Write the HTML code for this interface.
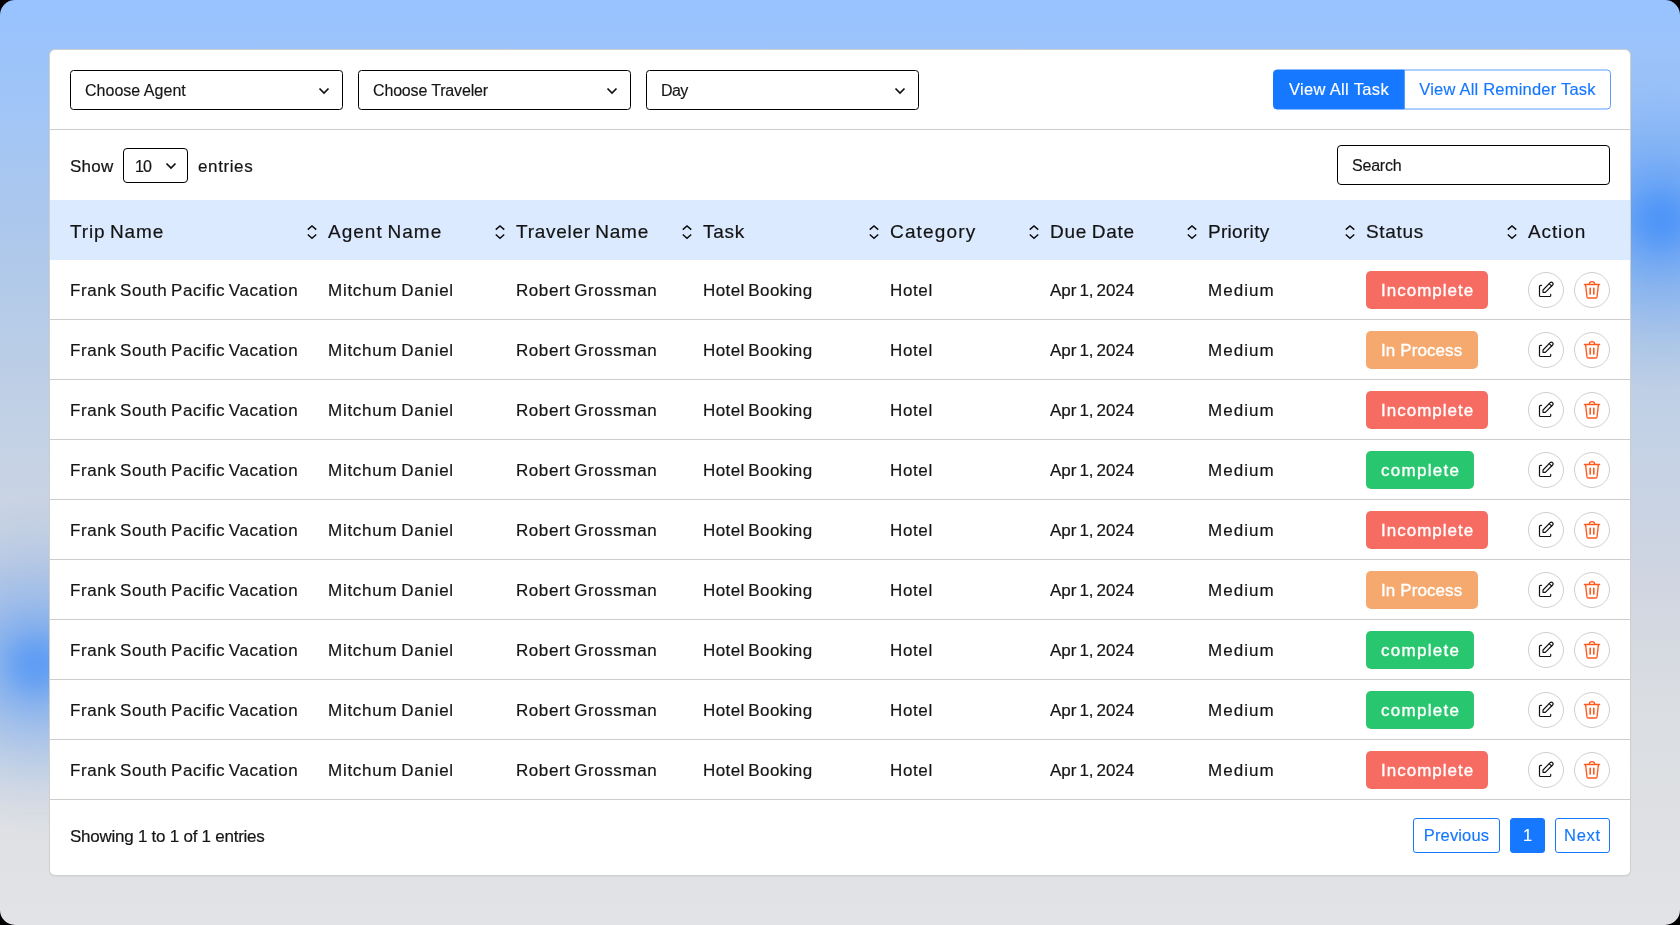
<!DOCTYPE html>
<html lang="en">
<head>
<meta charset="utf-8">
<title>Task List</title>
<style>
*{box-sizing:border-box;margin:0;padding:0}
html,body{width:1680px;height:925px;overflow:hidden;background:#000}
body{font-family:"Liberation Sans",sans-serif;color:#1f1f1f;position:relative}
#bg{position:absolute;left:0;top:0;width:1680px;height:925px;border-radius:15px;overflow:hidden;
 background:linear-gradient(180deg,rgb(152,195,255) 0px,rgb(160,197,247) 100px,rgb(170,199,238) 200px,rgb(183,204,231) 330px,rgb(197,210,229) 450px,rgb(207,213,225) 575px,rgb(218,221,225) 700px,rgb(226,227,230) 925px)}
.blob{position:absolute;width:360px;height:360px;filter:blur(4px);background:radial-gradient(circle at center,rgba(22,119,255,.62) 0px,rgba(22,119,255,.60) 12px,rgba(22,119,255,.52) 25px,rgba(22,119,255,.43) 36px,rgba(22,119,255,.38) 45px,rgba(22,119,255,.28) 65px,rgba(22,119,255,.20) 85px,rgba(22,119,255,.13) 105px,rgba(22,119,255,.06) 130px,rgba(22,119,255,0) 165px)}
#card{will-change:transform;position:absolute;left:50px;top:50px;width:1580px;height:825px;background:#fff;border-radius:5px;box-shadow:0 0 0 1px #cfcfcf,0 1px 2px rgba(0,0,0,.12)}
.abs{position:absolute}
.sel{position:absolute;top:20px;width:273px;height:40px;border:1px solid #000;border-radius:3.5px;background:#fff;font-size:16px;line-height:40px;padding-left:14px;color:#151515;-webkit-text-stroke:0.15px #151515}
.sel svg,.len svg{position:absolute}
.hr{position:absolute;left:0;width:1580px;height:1px;background:#cdcdcd}
.btn{position:absolute;top:20px;height:40px;font-size:16.5px;line-height:36px;text-align:center;transform:translate(0,-0.5px);-webkit-text-stroke:0.15px currentColor}
.txt{position:absolute;white-space:nowrap;color:#151515;-webkit-text-stroke:0.2px #151515}
#thead{position:absolute;left:0;top:150px;width:1580px;height:60px;background:#dbeafe}
.th{position:absolute;top:0;line-height:64px;word-spacing:-1.5px;font-size:19px;color:#141414;-webkit-text-stroke:0.2px #141414;white-space:nowrap}
.so{position:absolute;top:24px;width:12px;height:16px}
.row{position:absolute;left:0;width:1580px;height:60px;border-bottom:1px solid #cdcdcd}
.td{position:absolute;top:0;line-height:62px;word-spacing:-1.5px;font-size:17px;color:#151515;-webkit-text-stroke:0.2px #151515;white-space:nowrap}
.bd{position:absolute;left:1316px;top:11px;height:38px;border-radius:5px;color:#fff;font-size:17px;line-height:40px;padding-left:15px;-webkit-text-stroke:0.35px #fff;white-space:nowrap}
.r{background:#f66c62;width:122px}
.o{background:#f5a96e;width:112px}
.g{background:#28c76f;width:108px}
.ic{position:absolute;top:12px;width:36px;height:36px;border:1px solid #cfcfcf;border-radius:50%;background:#fff}
.ic svg{position:absolute}
.pg{position:absolute;top:768px;height:35px;border:1px solid #1677ff;border-radius:3px;-webkit-text-stroke:0.15px currentColor;color:#1677ff;font-size:16.5px;line-height:33px;text-align:center;background:#fff}
.h0{letter-spacing:0.84px}
.h1{letter-spacing:1.01px}
.h2{letter-spacing:0.73px}
.h3{letter-spacing:0.71px}
.h4{letter-spacing:1.16px}
.h5{letter-spacing:0.77px}
.h6{letter-spacing:0.3px}
.h7{letter-spacing:0.67px}
.h8{letter-spacing:0.88px}
.c1{letter-spacing:0.56px}
.c2{letter-spacing:0.73px}
.c3{letter-spacing:0.57px}
.c4{letter-spacing:0.4px}
.c5{letter-spacing:0.63px}
.c6{letter-spacing:-0.07px}
.c7{letter-spacing:1.05px}
.lr{letter-spacing:1.0px}
.lo{letter-spacing:0.1px}
.lg{letter-spacing:1.29px}
.s0{letter-spacing:0.02px}
.s1{letter-spacing:-0.16px}
.s2{letter-spacing:-0.63px}
.w_search{letter-spacing:-0.2px}
.w_show{letter-spacing:0.22px}
.w_entries{letter-spacing:0.61px}
.b1 span{letter-spacing:0.33px}
.b2 span{letter-spacing:0.21px}
.ft{letter-spacing:-0.25px}
.p1 span{letter-spacing:0.14px}
.p3 span{letter-spacing:0.75px}
</style>
</head>
<body>
<div id="bg">
 <div class="blob" style="left:-144px;top:485px"></div>
 <div class="blob" style="left:1481px;top:40px"></div>
 <div id="card">
  <div class="sel" style="left:20px"><span class="s0">Choose Agent</span><svg width="12" height="8" viewBox="0 0 12 8" style="left:247px;top:16px"><path d="M1.5 1.5 L6 6 L10.5 1.5" fill="none" stroke="#111" stroke-width="1.75" stroke-linecap="butt" stroke-linejoin="miter"/></svg></div>
  <div class="sel" style="left:308px"><span class="s1">Choose Traveler</span><svg width="12" height="8" viewBox="0 0 12 8" style="left:247px;top:16px"><path d="M1.5 1.5 L6 6 L10.5 1.5" fill="none" stroke="#111" stroke-width="1.75" stroke-linecap="butt" stroke-linejoin="miter"/></svg></div>
  <div class="sel" style="left:596px"><span class="s2">Day</span><svg width="12" height="8" viewBox="0 0 12 8" style="left:247px;top:16px"><path d="M1.5 1.5 L6 6 L10.5 1.5" fill="none" stroke="#111" stroke-width="1.75" stroke-linecap="butt" stroke-linejoin="miter"/></svg></div>
  <div class="btn b1" style="left:1223px;width:132px;background:#1677ff;color:#fff;border-radius:4px 0 0 4px;border:1px solid #1677ff"><span>View All Task</span></div>
  <div class="btn b2" style="left:1354px;width:207px;background:#fff;color:#1677ff;border-radius:0 4px 4px 0;border:1px solid #5a9dff"><span>View All Reminder Task</span></div>
  <div class="hr" style="top:79px"></div>
  <span class="txt lb" style="left:20px;top:98px;line-height:38px;font-size:17px"><span class="w_show">Show</span></span>
  <div class="len abs" style="left:73px;top:98px;width:65px;height:35px;border:1px solid #000;border-radius:4px;font-size:16px;line-height:35px;padding-left:11px;letter-spacing:-1px;color:#151515;-webkit-text-stroke:0.2px #151515"><span class="w_10">10</span><svg width="12" height="8" viewBox="0 0 12 8" style="left:41px;top:13px"><path d="M1.5 1.5 L6 6 L10.5 1.5" fill="none" stroke="#111" stroke-width="1.75" stroke-linecap="butt" stroke-linejoin="miter"/></svg></div>
  <span class="txt lb" style="left:148px;top:98px;line-height:38px;font-size:17px"><span class="w_entries">entries</span></span>
  <div class="abs" style="left:1287px;top:95px;width:273px;height:40px;border:1px solid #000;border-radius:4px;font-size:16px;line-height:40px;padding-left:14px;color:#151515;-webkit-text-stroke:0.15px #151515"><span class="w_search">Search</span></div>
  <div id="thead">
   <span class="th h0" style="left:20px">Trip Name</span><svg class="so" style="left:256px" viewBox="0 0 12 16"><path d="M1.75 5.6 L6 1.9 L10.25 5.6 M1.75 10.5 L6 14.2 L10.25 10.5" fill="none" stroke="#0a0a0a" stroke-width="1.45" stroke-linejoin="miter"/></svg>
   <span class="th h1" style="left:278px">Agent Name</span><svg class="so" style="left:444px" viewBox="0 0 12 16"><path d="M1.75 5.6 L6 1.9 L10.25 5.6 M1.75 10.5 L6 14.2 L10.25 10.5" fill="none" stroke="#0a0a0a" stroke-width="1.45" stroke-linejoin="miter"/></svg>
   <span class="th h2" style="left:466px">Traveler Name</span><svg class="so" style="left:631px" viewBox="0 0 12 16"><path d="M1.75 5.6 L6 1.9 L10.25 5.6 M1.75 10.5 L6 14.2 L10.25 10.5" fill="none" stroke="#0a0a0a" stroke-width="1.45" stroke-linejoin="miter"/></svg>
   <span class="th h3" style="left:653px">Task</span><svg class="so" style="left:818px" viewBox="0 0 12 16"><path d="M1.75 5.6 L6 1.9 L10.25 5.6 M1.75 10.5 L6 14.2 L10.25 10.5" fill="none" stroke="#0a0a0a" stroke-width="1.45" stroke-linejoin="miter"/></svg>
   <span class="th h4" style="left:840px">Category</span><svg class="so" style="left:978px" viewBox="0 0 12 16"><path d="M1.75 5.6 L6 1.9 L10.25 5.6 M1.75 10.5 L6 14.2 L10.25 10.5" fill="none" stroke="#0a0a0a" stroke-width="1.45" stroke-linejoin="miter"/></svg>
   <span class="th h5" style="left:1000px">Due Date</span><svg class="so" style="left:1136px" viewBox="0 0 12 16"><path d="M1.75 5.6 L6 1.9 L10.25 5.6 M1.75 10.5 L6 14.2 L10.25 10.5" fill="none" stroke="#0a0a0a" stroke-width="1.45" stroke-linejoin="miter"/></svg>
   <span class="th h6" style="left:1158px">Priority</span><svg class="so" style="left:1294px" viewBox="0 0 12 16"><path d="M1.75 5.6 L6 1.9 L10.25 5.6 M1.75 10.5 L6 14.2 L10.25 10.5" fill="none" stroke="#0a0a0a" stroke-width="1.45" stroke-linejoin="miter"/></svg>
   <span class="th h7" style="left:1316px">Status</span><svg class="so" style="left:1456px" viewBox="0 0 12 16"><path d="M1.75 5.6 L6 1.9 L10.25 5.6 M1.75 10.5 L6 14.2 L10.25 10.5" fill="none" stroke="#0a0a0a" stroke-width="1.45" stroke-linejoin="miter"/></svg>
   <span class="th h8" style="left:1478px">Action</span>
  </div>
  <div class="row" style="top:210px"><span class="td c1" style="left:20px">Frank South Pacific Vacation</span><span class="td c2" style="left:278px">Mitchum Daniel</span><span class="td c3" style="left:466px">Robert Grossman</span><span class="td c4" style="left:653px">Hotel Booking</span><span class="td c5" style="left:840px">Hotel</span><span class="td c6" style="left:1000px">Apr 1, 2024</span><span class="td c7" style="left:1158px">Medium</span><span class="bd r"><span class="lr">Incomplete</span></span><span class="ic" style="left:1478px"><svg width="18" height="18" viewBox="0 0 18 18" style="left:8px;top:8px"><g fill="none" stroke="#111" stroke-width="1.2" stroke-linecap="round" stroke-linejoin="round"><path d="M4.6 4.3 H3.6 a1.1 1.1 0 0 0 -1.1 1.1 V14.4 a1.1 1.1 0 0 0 1.1 1.1 H12.6 a1.1 1.1 0 0 0 1.1 -1.1 V13.4"/><path d="M13.2 1.6 a1.7 1.7 0 0 1 2.4 2.4 L8.3 11.3 H6 V9 Z"/><path d="M12.2 2.7 L14.6 5.1"/></g></svg></span><span class="ic" style="left:1524px"><svg width="20" height="20" viewBox="0 0 20 20" style="left:7px;top:7px"><g fill="none" stroke="#ff5a1f" stroke-width="1.35" stroke-linecap="round" stroke-linejoin="round"><path d="M2.4 4.5 H17.6"/><path d="M7.3 4.3 a2.7 2.7 0 0 1 5.4 0"/><path d="M3.6 4.8 L5 16.9 a1.3 1.3 0 0 0 1.3 1.1 H13.7 a1.3 1.3 0 0 0 1.3 -1.1 L16.4 4.8"/><path d="M8.2 8.3 V14.1 M11.8 8.3 V14.1" stroke-width="1.6"/></g></svg></span></div>
  <div class="row" style="top:270px"><span class="td c1" style="left:20px">Frank South Pacific Vacation</span><span class="td c2" style="left:278px">Mitchum Daniel</span><span class="td c3" style="left:466px">Robert Grossman</span><span class="td c4" style="left:653px">Hotel Booking</span><span class="td c5" style="left:840px">Hotel</span><span class="td c6" style="left:1000px">Apr 1, 2024</span><span class="td c7" style="left:1158px">Medium</span><span class="bd o"><span class="lo">In Process</span></span><span class="ic" style="left:1478px"><svg width="18" height="18" viewBox="0 0 18 18" style="left:8px;top:8px"><g fill="none" stroke="#111" stroke-width="1.2" stroke-linecap="round" stroke-linejoin="round"><path d="M4.6 4.3 H3.6 a1.1 1.1 0 0 0 -1.1 1.1 V14.4 a1.1 1.1 0 0 0 1.1 1.1 H12.6 a1.1 1.1 0 0 0 1.1 -1.1 V13.4"/><path d="M13.2 1.6 a1.7 1.7 0 0 1 2.4 2.4 L8.3 11.3 H6 V9 Z"/><path d="M12.2 2.7 L14.6 5.1"/></g></svg></span><span class="ic" style="left:1524px"><svg width="20" height="20" viewBox="0 0 20 20" style="left:7px;top:7px"><g fill="none" stroke="#ff5a1f" stroke-width="1.35" stroke-linecap="round" stroke-linejoin="round"><path d="M2.4 4.5 H17.6"/><path d="M7.3 4.3 a2.7 2.7 0 0 1 5.4 0"/><path d="M3.6 4.8 L5 16.9 a1.3 1.3 0 0 0 1.3 1.1 H13.7 a1.3 1.3 0 0 0 1.3 -1.1 L16.4 4.8"/><path d="M8.2 8.3 V14.1 M11.8 8.3 V14.1" stroke-width="1.6"/></g></svg></span></div>
  <div class="row" style="top:330px"><span class="td c1" style="left:20px">Frank South Pacific Vacation</span><span class="td c2" style="left:278px">Mitchum Daniel</span><span class="td c3" style="left:466px">Robert Grossman</span><span class="td c4" style="left:653px">Hotel Booking</span><span class="td c5" style="left:840px">Hotel</span><span class="td c6" style="left:1000px">Apr 1, 2024</span><span class="td c7" style="left:1158px">Medium</span><span class="bd r"><span class="lr">Incomplete</span></span><span class="ic" style="left:1478px"><svg width="18" height="18" viewBox="0 0 18 18" style="left:8px;top:8px"><g fill="none" stroke="#111" stroke-width="1.2" stroke-linecap="round" stroke-linejoin="round"><path d="M4.6 4.3 H3.6 a1.1 1.1 0 0 0 -1.1 1.1 V14.4 a1.1 1.1 0 0 0 1.1 1.1 H12.6 a1.1 1.1 0 0 0 1.1 -1.1 V13.4"/><path d="M13.2 1.6 a1.7 1.7 0 0 1 2.4 2.4 L8.3 11.3 H6 V9 Z"/><path d="M12.2 2.7 L14.6 5.1"/></g></svg></span><span class="ic" style="left:1524px"><svg width="20" height="20" viewBox="0 0 20 20" style="left:7px;top:7px"><g fill="none" stroke="#ff5a1f" stroke-width="1.35" stroke-linecap="round" stroke-linejoin="round"><path d="M2.4 4.5 H17.6"/><path d="M7.3 4.3 a2.7 2.7 0 0 1 5.4 0"/><path d="M3.6 4.8 L5 16.9 a1.3 1.3 0 0 0 1.3 1.1 H13.7 a1.3 1.3 0 0 0 1.3 -1.1 L16.4 4.8"/><path d="M8.2 8.3 V14.1 M11.8 8.3 V14.1" stroke-width="1.6"/></g></svg></span></div>
  <div class="row" style="top:390px"><span class="td c1" style="left:20px">Frank South Pacific Vacation</span><span class="td c2" style="left:278px">Mitchum Daniel</span><span class="td c3" style="left:466px">Robert Grossman</span><span class="td c4" style="left:653px">Hotel Booking</span><span class="td c5" style="left:840px">Hotel</span><span class="td c6" style="left:1000px">Apr 1, 2024</span><span class="td c7" style="left:1158px">Medium</span><span class="bd g"><span class="lg">complete</span></span><span class="ic" style="left:1478px"><svg width="18" height="18" viewBox="0 0 18 18" style="left:8px;top:8px"><g fill="none" stroke="#111" stroke-width="1.2" stroke-linecap="round" stroke-linejoin="round"><path d="M4.6 4.3 H3.6 a1.1 1.1 0 0 0 -1.1 1.1 V14.4 a1.1 1.1 0 0 0 1.1 1.1 H12.6 a1.1 1.1 0 0 0 1.1 -1.1 V13.4"/><path d="M13.2 1.6 a1.7 1.7 0 0 1 2.4 2.4 L8.3 11.3 H6 V9 Z"/><path d="M12.2 2.7 L14.6 5.1"/></g></svg></span><span class="ic" style="left:1524px"><svg width="20" height="20" viewBox="0 0 20 20" style="left:7px;top:7px"><g fill="none" stroke="#ff5a1f" stroke-width="1.35" stroke-linecap="round" stroke-linejoin="round"><path d="M2.4 4.5 H17.6"/><path d="M7.3 4.3 a2.7 2.7 0 0 1 5.4 0"/><path d="M3.6 4.8 L5 16.9 a1.3 1.3 0 0 0 1.3 1.1 H13.7 a1.3 1.3 0 0 0 1.3 -1.1 L16.4 4.8"/><path d="M8.2 8.3 V14.1 M11.8 8.3 V14.1" stroke-width="1.6"/></g></svg></span></div>
  <div class="row" style="top:450px"><span class="td c1" style="left:20px">Frank South Pacific Vacation</span><span class="td c2" style="left:278px">Mitchum Daniel</span><span class="td c3" style="left:466px">Robert Grossman</span><span class="td c4" style="left:653px">Hotel Booking</span><span class="td c5" style="left:840px">Hotel</span><span class="td c6" style="left:1000px">Apr 1, 2024</span><span class="td c7" style="left:1158px">Medium</span><span class="bd r"><span class="lr">Incomplete</span></span><span class="ic" style="left:1478px"><svg width="18" height="18" viewBox="0 0 18 18" style="left:8px;top:8px"><g fill="none" stroke="#111" stroke-width="1.2" stroke-linecap="round" stroke-linejoin="round"><path d="M4.6 4.3 H3.6 a1.1 1.1 0 0 0 -1.1 1.1 V14.4 a1.1 1.1 0 0 0 1.1 1.1 H12.6 a1.1 1.1 0 0 0 1.1 -1.1 V13.4"/><path d="M13.2 1.6 a1.7 1.7 0 0 1 2.4 2.4 L8.3 11.3 H6 V9 Z"/><path d="M12.2 2.7 L14.6 5.1"/></g></svg></span><span class="ic" style="left:1524px"><svg width="20" height="20" viewBox="0 0 20 20" style="left:7px;top:7px"><g fill="none" stroke="#ff5a1f" stroke-width="1.35" stroke-linecap="round" stroke-linejoin="round"><path d="M2.4 4.5 H17.6"/><path d="M7.3 4.3 a2.7 2.7 0 0 1 5.4 0"/><path d="M3.6 4.8 L5 16.9 a1.3 1.3 0 0 0 1.3 1.1 H13.7 a1.3 1.3 0 0 0 1.3 -1.1 L16.4 4.8"/><path d="M8.2 8.3 V14.1 M11.8 8.3 V14.1" stroke-width="1.6"/></g></svg></span></div>
  <div class="row" style="top:510px"><span class="td c1" style="left:20px">Frank South Pacific Vacation</span><span class="td c2" style="left:278px">Mitchum Daniel</span><span class="td c3" style="left:466px">Robert Grossman</span><span class="td c4" style="left:653px">Hotel Booking</span><span class="td c5" style="left:840px">Hotel</span><span class="td c6" style="left:1000px">Apr 1, 2024</span><span class="td c7" style="left:1158px">Medium</span><span class="bd o"><span class="lo">In Process</span></span><span class="ic" style="left:1478px"><svg width="18" height="18" viewBox="0 0 18 18" style="left:8px;top:8px"><g fill="none" stroke="#111" stroke-width="1.2" stroke-linecap="round" stroke-linejoin="round"><path d="M4.6 4.3 H3.6 a1.1 1.1 0 0 0 -1.1 1.1 V14.4 a1.1 1.1 0 0 0 1.1 1.1 H12.6 a1.1 1.1 0 0 0 1.1 -1.1 V13.4"/><path d="M13.2 1.6 a1.7 1.7 0 0 1 2.4 2.4 L8.3 11.3 H6 V9 Z"/><path d="M12.2 2.7 L14.6 5.1"/></g></svg></span><span class="ic" style="left:1524px"><svg width="20" height="20" viewBox="0 0 20 20" style="left:7px;top:7px"><g fill="none" stroke="#ff5a1f" stroke-width="1.35" stroke-linecap="round" stroke-linejoin="round"><path d="M2.4 4.5 H17.6"/><path d="M7.3 4.3 a2.7 2.7 0 0 1 5.4 0"/><path d="M3.6 4.8 L5 16.9 a1.3 1.3 0 0 0 1.3 1.1 H13.7 a1.3 1.3 0 0 0 1.3 -1.1 L16.4 4.8"/><path d="M8.2 8.3 V14.1 M11.8 8.3 V14.1" stroke-width="1.6"/></g></svg></span></div>
  <div class="row" style="top:570px"><span class="td c1" style="left:20px">Frank South Pacific Vacation</span><span class="td c2" style="left:278px">Mitchum Daniel</span><span class="td c3" style="left:466px">Robert Grossman</span><span class="td c4" style="left:653px">Hotel Booking</span><span class="td c5" style="left:840px">Hotel</span><span class="td c6" style="left:1000px">Apr 1, 2024</span><span class="td c7" style="left:1158px">Medium</span><span class="bd g"><span class="lg">complete</span></span><span class="ic" style="left:1478px"><svg width="18" height="18" viewBox="0 0 18 18" style="left:8px;top:8px"><g fill="none" stroke="#111" stroke-width="1.2" stroke-linecap="round" stroke-linejoin="round"><path d="M4.6 4.3 H3.6 a1.1 1.1 0 0 0 -1.1 1.1 V14.4 a1.1 1.1 0 0 0 1.1 1.1 H12.6 a1.1 1.1 0 0 0 1.1 -1.1 V13.4"/><path d="M13.2 1.6 a1.7 1.7 0 0 1 2.4 2.4 L8.3 11.3 H6 V9 Z"/><path d="M12.2 2.7 L14.6 5.1"/></g></svg></span><span class="ic" style="left:1524px"><svg width="20" height="20" viewBox="0 0 20 20" style="left:7px;top:7px"><g fill="none" stroke="#ff5a1f" stroke-width="1.35" stroke-linecap="round" stroke-linejoin="round"><path d="M2.4 4.5 H17.6"/><path d="M7.3 4.3 a2.7 2.7 0 0 1 5.4 0"/><path d="M3.6 4.8 L5 16.9 a1.3 1.3 0 0 0 1.3 1.1 H13.7 a1.3 1.3 0 0 0 1.3 -1.1 L16.4 4.8"/><path d="M8.2 8.3 V14.1 M11.8 8.3 V14.1" stroke-width="1.6"/></g></svg></span></div>
  <div class="row" style="top:630px"><span class="td c1" style="left:20px">Frank South Pacific Vacation</span><span class="td c2" style="left:278px">Mitchum Daniel</span><span class="td c3" style="left:466px">Robert Grossman</span><span class="td c4" style="left:653px">Hotel Booking</span><span class="td c5" style="left:840px">Hotel</span><span class="td c6" style="left:1000px">Apr 1, 2024</span><span class="td c7" style="left:1158px">Medium</span><span class="bd g"><span class="lg">complete</span></span><span class="ic" style="left:1478px"><svg width="18" height="18" viewBox="0 0 18 18" style="left:8px;top:8px"><g fill="none" stroke="#111" stroke-width="1.2" stroke-linecap="round" stroke-linejoin="round"><path d="M4.6 4.3 H3.6 a1.1 1.1 0 0 0 -1.1 1.1 V14.4 a1.1 1.1 0 0 0 1.1 1.1 H12.6 a1.1 1.1 0 0 0 1.1 -1.1 V13.4"/><path d="M13.2 1.6 a1.7 1.7 0 0 1 2.4 2.4 L8.3 11.3 H6 V9 Z"/><path d="M12.2 2.7 L14.6 5.1"/></g></svg></span><span class="ic" style="left:1524px"><svg width="20" height="20" viewBox="0 0 20 20" style="left:7px;top:7px"><g fill="none" stroke="#ff5a1f" stroke-width="1.35" stroke-linecap="round" stroke-linejoin="round"><path d="M2.4 4.5 H17.6"/><path d="M7.3 4.3 a2.7 2.7 0 0 1 5.4 0"/><path d="M3.6 4.8 L5 16.9 a1.3 1.3 0 0 0 1.3 1.1 H13.7 a1.3 1.3 0 0 0 1.3 -1.1 L16.4 4.8"/><path d="M8.2 8.3 V14.1 M11.8 8.3 V14.1" stroke-width="1.6"/></g></svg></span></div>
  <div class="row" style="top:690px"><span class="td c1" style="left:20px">Frank South Pacific Vacation</span><span class="td c2" style="left:278px">Mitchum Daniel</span><span class="td c3" style="left:466px">Robert Grossman</span><span class="td c4" style="left:653px">Hotel Booking</span><span class="td c5" style="left:840px">Hotel</span><span class="td c6" style="left:1000px">Apr 1, 2024</span><span class="td c7" style="left:1158px">Medium</span><span class="bd r"><span class="lr">Incomplete</span></span><span class="ic" style="left:1478px"><svg width="18" height="18" viewBox="0 0 18 18" style="left:8px;top:8px"><g fill="none" stroke="#111" stroke-width="1.2" stroke-linecap="round" stroke-linejoin="round"><path d="M4.6 4.3 H3.6 a1.1 1.1 0 0 0 -1.1 1.1 V14.4 a1.1 1.1 0 0 0 1.1 1.1 H12.6 a1.1 1.1 0 0 0 1.1 -1.1 V13.4"/><path d="M13.2 1.6 a1.7 1.7 0 0 1 2.4 2.4 L8.3 11.3 H6 V9 Z"/><path d="M12.2 2.7 L14.6 5.1"/></g></svg></span><span class="ic" style="left:1524px"><svg width="20" height="20" viewBox="0 0 20 20" style="left:7px;top:7px"><g fill="none" stroke="#ff5a1f" stroke-width="1.35" stroke-linecap="round" stroke-linejoin="round"><path d="M2.4 4.5 H17.6"/><path d="M7.3 4.3 a2.7 2.7 0 0 1 5.4 0"/><path d="M3.6 4.8 L5 16.9 a1.3 1.3 0 0 0 1.3 1.1 H13.7 a1.3 1.3 0 0 0 1.3 -1.1 L16.4 4.8"/><path d="M8.2 8.3 V14.1 M11.8 8.3 V14.1" stroke-width="1.6"/></g></svg></span></div>
  <span class="txt ft" style="left:20px;top:768px;line-height:38px;font-size:17px">Showing 1 to 1 of 1 entries</span>
  <div class="pg p1" style="left:1363px;width:87px"><span>Previous</span></div>
  <div class="pg p2" style="left:1460px;width:35px;background:#1677ff;color:#fff"><span>1</span></div>
  <div class="pg p3" style="left:1505px;width:55px"><span>Next</span></div>
 </div>
</div>
</body>
</html>
